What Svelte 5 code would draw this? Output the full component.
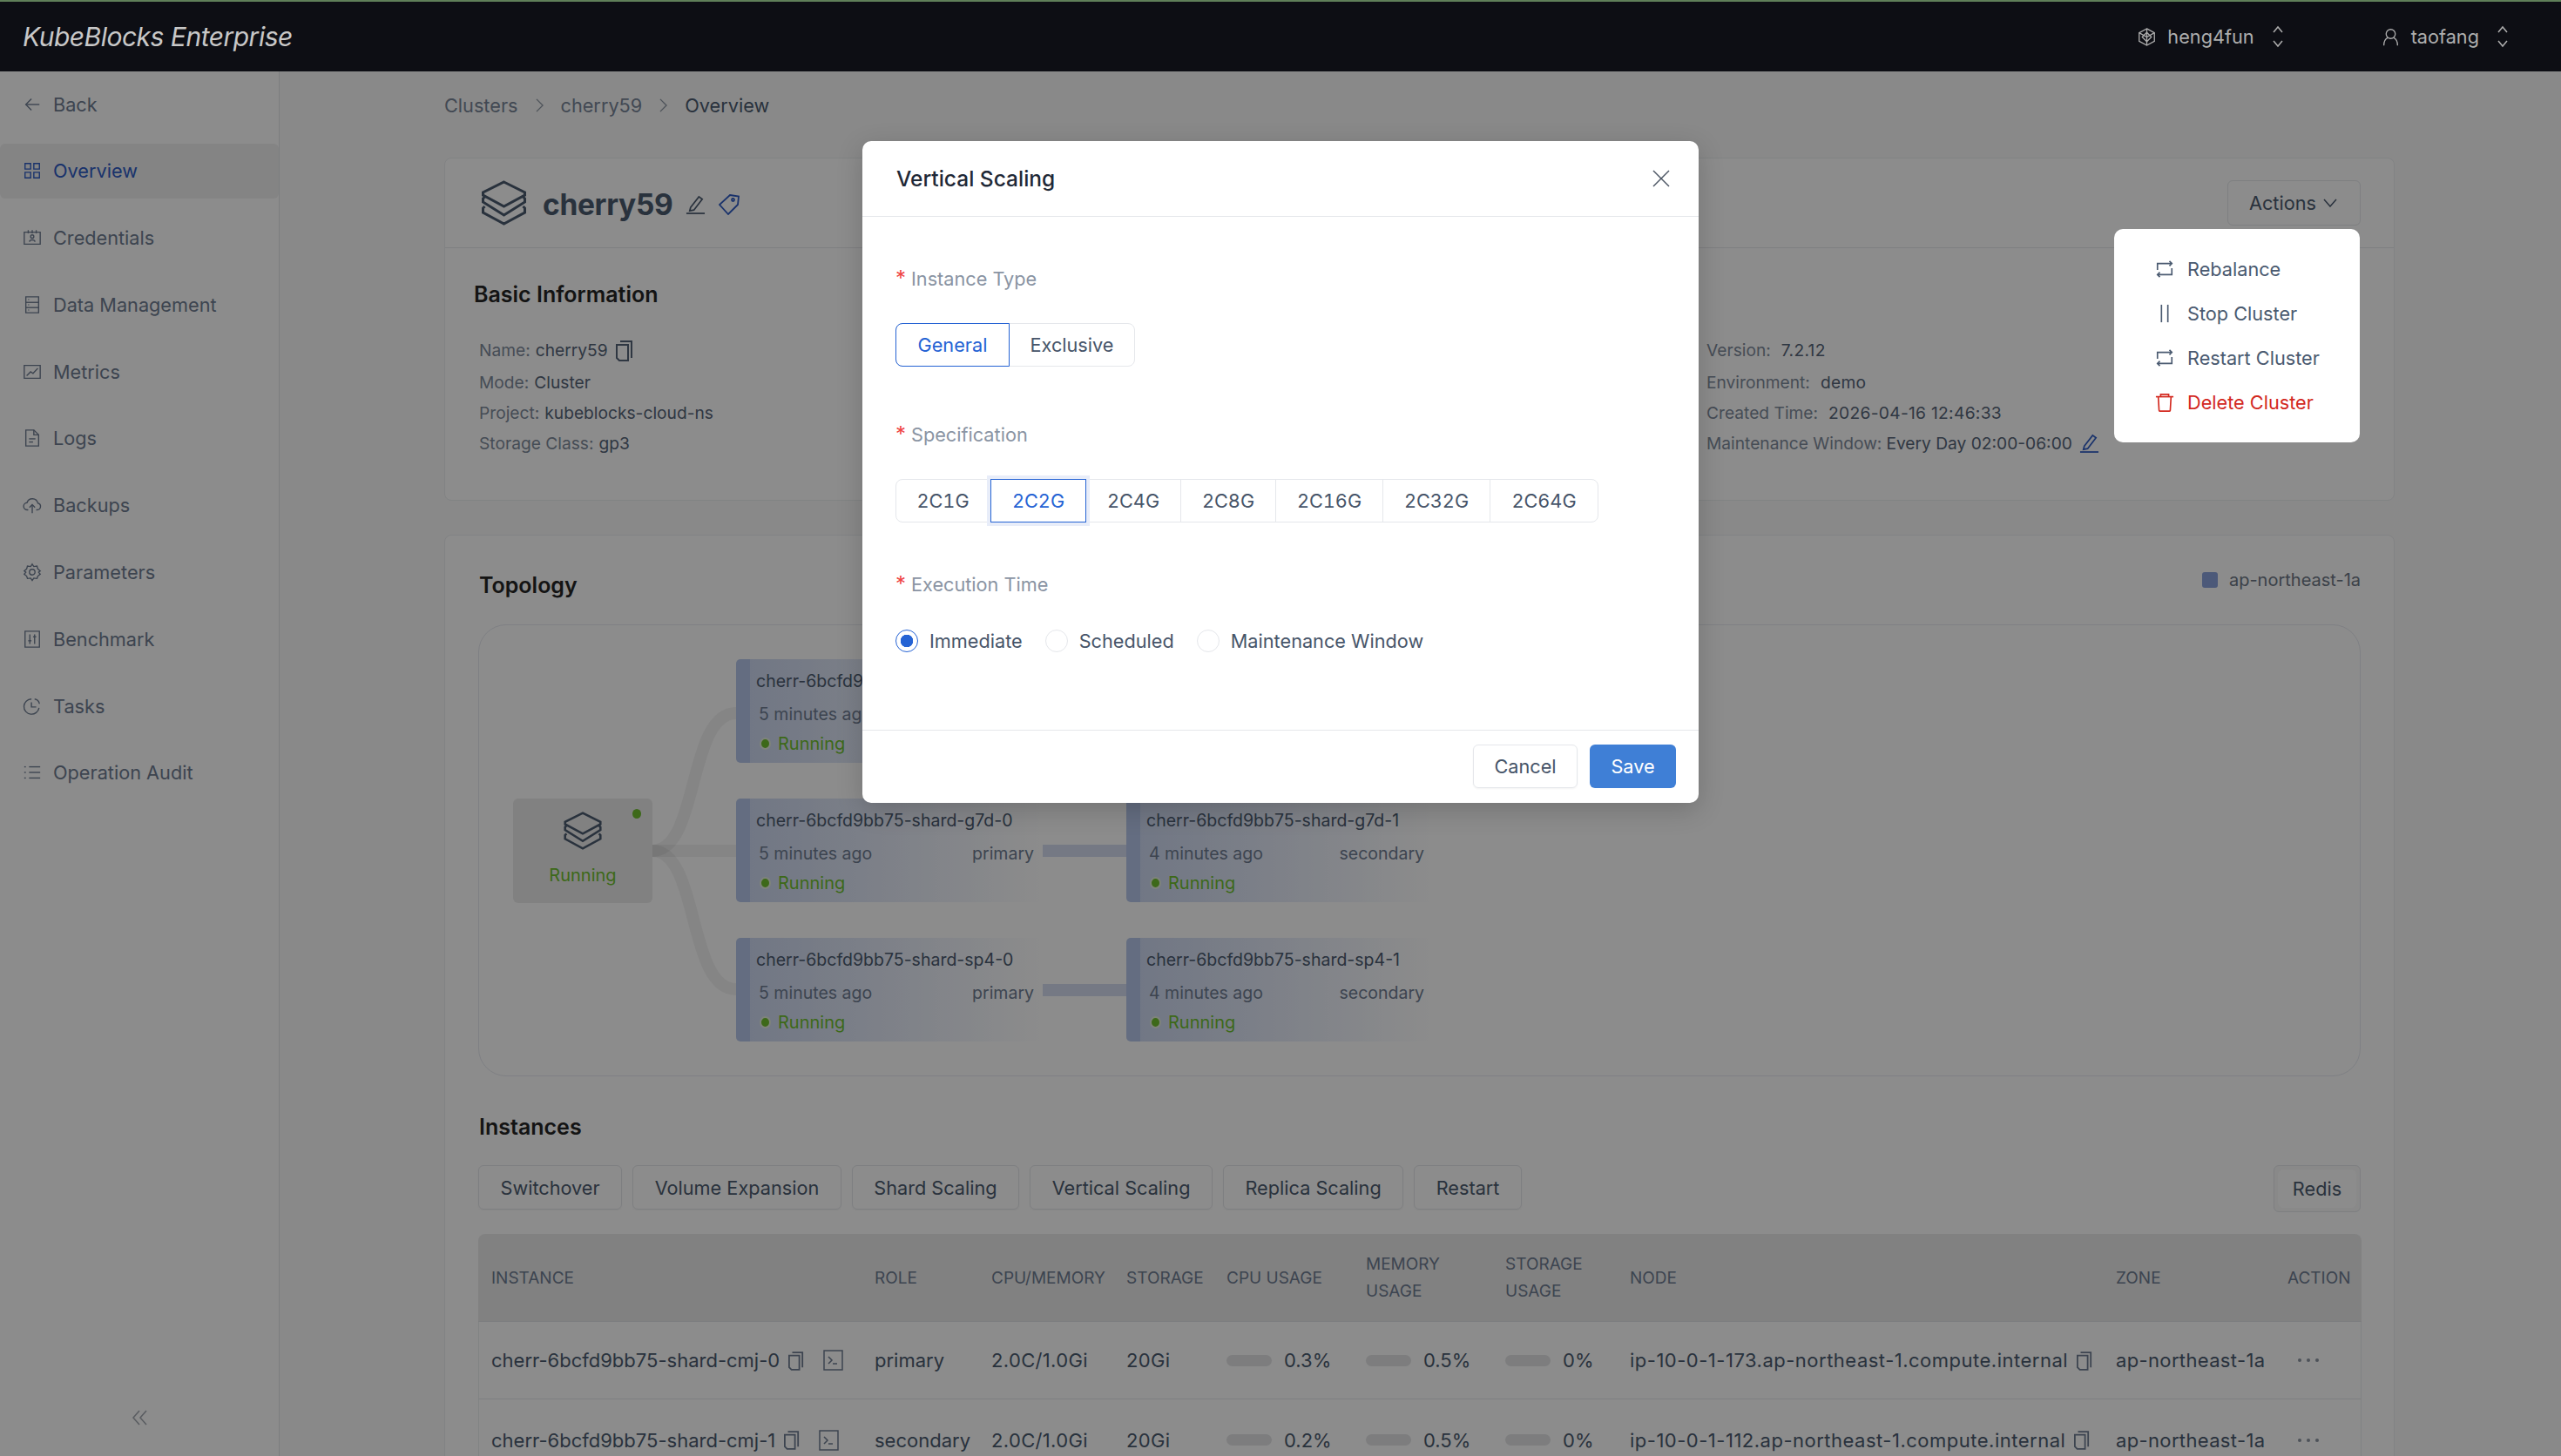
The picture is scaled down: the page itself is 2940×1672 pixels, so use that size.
<script>
    const nav = [
        {label: 'Back', icon: ['M21 12H4', 'M11 5l-7 7 7 7']},
        {label: 'Overview', active: true, icon: ['M3 3h7v7H3z', 'M14 3h7v7h-7z', 'M3 14h7v7H3z', 'M14 14h7v7h-7z']},
        {label: 'Credentials', icon: ['M2 5h20v15H2z', 'M7 2.500v4', 'M12 2.500v4', 'M17 2.500v4', 'M12 8.500a2 2 0 1 0 0 4 2 2 0 0 0 0-4z', 'M8.500 17c.5-3 6.500-3 7 0']},
        {label: 'Data Management', icon: ['M4 2h16v20H4z', 'M4 9h16', 'M4 15.500h16', 'M7 5.500h1', 'M7 12h1', 'M7 18.500h1']},
        {label: 'Metrics', icon: ['M2 4h20v16H2z', 'M5 17l5-5 3 2 6-6.500']},
        {label: 'Logs', icon: ['M4 2h10l6 6v14H4z', 'M14 2v6h6', 'M8 13h8', 'M8 17h5']},
        {label: 'Backups', icon: ['M7 18H6a4.500 4.500 0 0 1-.5-9A7 7 0 0 1 19 9.500 4.300 4.300 0 0 1 18 18h-1', 'M12 22V12', 'M8.500 15l3.500-3.500 3.500 3.500']},
        {label: 'Parameters', icon: ['M12 2l2 3 4-.5 1 3.500 3 2.500-2 1.500 2 2.500-3 2.500-1 3-4-.5-2 3-2-3-4 .5-1-3-3-2.500 2-2.500-2-1.500 3-2.500 1-3.500 4 .5z', 'M12 8.500a3.500 3.500 0 1 0 0 7 3.500 3.500 0 0 0 0-7z']},
        {label: 'Benchmark', icon: ['M3 2h18v20H3z', 'M9 6v12', 'M15 6v12', 'M7 14h4', 'M13 9h4']},
        {label: 'Tasks', icon: ['M11 3a9.500 9.500 0 1 0 9.500 11', 'M11 7v6h6', 'M15 3c3 .5 5.500 3 6 6']},
        {label: 'Operation Audit', icon: ['M8 5h14', 'M8 12h14', 'M8 19h14', 'M2 5h2', 'M2 12h2', 'M2 19h2']},
    ];

    const leftFields = [
        ['Name:', 'cherry59'],
        ['Mode:', 'Cluster'],
        ['Project:', 'kubeblocks-cloud-ns'],
        ['Storage Class:', 'gp3'],
    ];
    const rightFields = [
        ['Version:', '7.2.12'],
        ['Environment:', 'demo'],
        ['Created Time:', '2026-04-16 12:46:33'],
        ['Maintenance Window:', 'Every Day 02:00-06:00'],
    ];

    const shards = ['cmj', 'g7d', 'sp4'];
    const ops = ['Switchover', 'Volume Expansion', 'Shard Scaling', 'Vertical Scaling', 'Replica Scaling', 'Restart'];
    const heads = ['Instance', 'Role', 'CPU/Memory', 'Storage', 'CPU Usage', 'Memory Usage', 'Storage Usage', 'Node', 'Zone', 'Action'];
    const widths = [441, 134, 155, 115, 160, 160, 143, 558, 197, 99];
    const rows = [
        {name: 'cherr-6bcfd9bb75-shard-cmj-0', role: 'primary', cpu: '0.3%', node: 'ip-10-0-1-173.ap-northeast-1.compute.internal'},
        {name: 'cherr-6bcfd9bb75-shard-cmj-1', role: 'secondary', cpu: '0.2%', node: 'ip-10-0-1-112.ap-northeast-1.compute.internal'},
    ];
    const specs = ['2C1G', '2C2G', '2C4G', '2C8G', '2C16G', '2C32G', '2C64G'];
    const swap = ['M3 13V5h18', 'M18 2l3 3-3 3', 'M21 11v8H3', 'M6 16l-3 3 3 3'];
    const menu = [
        {label: 'Rebalance', icon: swap},
        {label: 'Stop Cluster', icon: ['M8 1v22', 'M16 1v22']},
        {label: 'Restart Cluster', icon: swap},
        {label: 'Delete Cluster', danger: true, icon: ['M1 5h22', 'M7 5V2h10v3', 'M4 5l1 17a1 1 0 0 0 1 1h12a1 1 0 0 0 1-1l1-17']},
    ];
    const stack = ['M26 2l24 12v3L26 30 2 17v-3z', 'M4 19l-2 2v4l24 15 24-15v-4l-2-2', 'M4 30l-2 2v5l24 13 24-13v-5l-2-2'];
    const pencil = ['M6 16L16 3l4 3-10 13-5 1z', 'M1 23h22'];
</script>

{#snippet icon(paths, cls, box = '0 0 24 24')}
    <svg class={cls} viewBox={box} fill="none" stroke="currentColor">
        {#each paths as d}
            <path {d} />
        {/each}
    </svg>
{/snippet}

{#snippet copy(cls)}
    <svg class={cls} viewBox="0 0 20 25" fill="none" stroke="currentColor" stroke-width="2">
        <path d="M1 6h13v18H4l-3-3z" />
        <path d="M5 2h13v19" />
    </svg>
{/snippet}

{#snippet updown()}
    <svg class="updown" viewBox="0 0 14 26" fill="none" stroke="currentColor" stroke-width="1.500">
        <path d="M2 8l5-6 5 6" />
        <path d="M2 18l5 6 5-6" />
    </svg>
{/snippet}

<div class="page">
    <header class="topbar">
        <span class="logo">KubeBlocks Enterprise</span>
        <div class="account org">
            <svg class="top-icon" viewBox="0 0 24 24" fill="none" stroke="currentColor" stroke-width="1.500">
                <path d="M12 1l10 5.500v11L12 23 2 17.500v-11z" />
                <path d="M12 6l6 6-6 6-6-6z" />
                <path d="M2 6.500L12 12l10-5.500" />
                <path d="M12 1v22" />
            </svg>
            <span>heng4fun</span>
            {@render updown()}
        </div>
        <div class="account user">
            <svg class="top-icon" viewBox="0 0 24 24" fill="none" stroke="currentColor" stroke-width="1.500">
                <path d="M12 2a6 6 0 1 0 0 12 6 6 0 0 0 0-12z" />
                <path d="M3 23c0-6 3-9 5-10" />
                <path d="M21 23c0-6-3-9-5-10" />
            </svg>
            <span>taofang</span>
            {@render updown()}
        </div>
    </header>

    <div class="body">
        <aside class="sidebar">
            <nav>
                {#each nav as item}
                    <div class="nav-item" class:active={item.active}>
                        {@render icon(item.icon, 'nav-icon')}
                        <span>{item.label}</span>
                    </div>
                {/each}
            </nav>
            <svg class="collapse" viewBox="0 0 17 18" fill="none" stroke="currentColor" stroke-width="1.500">
                <path d="M8 1L1 9l7 8" />
                <path d="M16 1L9 9l7 8" />
            </svg>
        </aside>

        <main class="main">
            <div class="crumbs">
                <span>Clusters</span>
                <svg class="sep" viewBox="0 0 10 18" fill="none" stroke="currentColor" stroke-width="1.500"><path d="M1 1l8 8-8 8" /></svg>
                <span>cherry59</span>
                <svg class="sep" viewBox="0 0 10 18" fill="none" stroke="currentColor" stroke-width="1.500"><path d="M1 1l8 8-8 8" /></svg>
                <span class="current">Overview</span>
            </div>

            <section class="card info-card">
                <div class="card-head">
                    <svg class="stack" viewBox="0 0 52 52" fill="none" stroke="currentColor" stroke-width="3">
                        {#each stack as d}
                            <path {d} />
                        {/each}
                    </svg>
                    <h1>cherry59</h1>
                    {@render icon(pencil, 'pencil')}
                    <svg class="tag" viewBox="0 0 24 24" fill="none" stroke="currentColor" stroke-width="1.800">
                        <path d="M13 1l10 1.500L22 12 11 23 1 12z" />
                        <path d="M16.500 5a1.500 1.500 0 1 0 0 3 1.500 1.500 0 0 0 0-3z" />
                    </svg>
                    <div class="actions">
                        Actions
                        <svg class="chev" viewBox="0 0 16 10" fill="none" stroke="currentColor" stroke-width="1.500"><path d="M1 1l7 8 7-8" /></svg>
                    </div>
                </div>
                <div class="info-body">
                    <h2>Basic Information</h2>
                    <div class="fields">
                        <div class="field-col">
                            {#each leftFields as [label, value], i}
                                <div class="field">
                                    <span class="field-label">{label}</span>
                                    <span class="field-value">{value}</span>
                                    {#if i === 0}
                                        {@render copy('copy-name')}
                                    {/if}
                                </div>
                            {/each}
                        </div>
                        <div class="field-col wide-gap">
                            {#each rightFields as [label, value], i}
                                <div class="field">
                                    <span class="field-label">{label}</span>
                                    <span class="field-value">{value}</span>
                                    {#if i === 3}
                                        {@render icon(pencil, 'pencil-blue')}
                                    {/if}
                                </div>
                            {/each}
                        </div>
                    </div>
                </div>
            </section>

            <section class="card topo-card">
                <div class="topo-head">
                    <h2>Topology</h2>
                    <div class="legend"><i></i>ap-northeast-1a</div>
                </div>
                <div class="topo">
                    <svg class="links" viewBox="0 0 2160 519" fill="none" stroke-width="14">
                        <path d="M199 259C253 259 239 101 295 101" />
                        <path d="M199 259H295" />
                        <path d="M199 259C253 259 239 418 295 418" />
                    </svg>
                    <div class="root-node">
                        <i class="root-dot"></i>
                        <svg class="root-icon" viewBox="0 0 52 52" fill="none" stroke="currentColor" stroke-width="3">
                            {#each stack as d}
                                <path {d} />
                            {/each}
                        </svg>
                        <span class="running">Running</span>
                    </div>
                    {#each shards as shard, i}
                        <div class="pod" style="left: 295px; top: {39 + i * 160}px">
                            <div class="pod-name">cherr-6bcfd9bb75-shard-{shard}-0</div>
                            <div class="pod-meta"><span>5 minutes ago</span><span>primary</span></div>
                            <div class="pod-status"><i></i><span class="running">Running</span></div>
                        </div>
                        <div class="pod-link" style="top: {92 + i * 160}px"></div>
                        <div class="pod" style="left: 743px; top: {39 + i * 160}px">
                            <div class="pod-name">cherr-6bcfd9bb75-shard-{shard}-1</div>
                            <div class="pod-meta"><span>4 minutes ago</span><span>secondary</span></div>
                            <div class="pod-status"><i></i><span class="running">Running</span></div>
                        </div>
                    {/each}
                </div>

                <h2 class="instances-title">Instances</h2>
                <div class="toolbar">
                    {#each ops as op}
                        <div class="btn">{op}</div>
                    {/each}
                    <div class="switch"><span>Redis</span></div>
                </div>

                <table>
                    <colgroup>
                        {#each widths as w}
                            <col style="width: {w}px" />
                        {/each}
                    </colgroup>
                    <thead>
                        <tr>
                            {#each heads as head}
                                <th>{head}</th>
                            {/each}
                        </tr>
                    </thead>
                    <tbody>
                        {#each rows as row}
                            <tr>
                                <td>
                                    <div class="inst">
                                        {row.name}
                                        {@render copy('copy-cell')}
                                        <svg class="term" viewBox="0 0 23 24" fill="none" stroke="currentColor" stroke-width="1.500">
                                            <path d="M1 1h21v22H1z" />
                                            <path d="M6 8l4 4-4 4" />
                                            <path d="M11 16h5" />
                                        </svg>
                                    </div>
                                </td>
                                <td>{row.role}</td>
                                <td class="spaced">2.0C/1.0Gi</td>
                                <td class="spaced">20Gi</td>
                                <td><div class="usage"><i></i>{row.cpu}</div></td>
                                <td><div class="usage"><i></i>0.5%</div></td>
                                <td><div class="usage"><i></i>0%</div></td>
                                <td>
                                    <div class="inst">
                                        <span class="node-name">{row.node}</span>
                                        {@render copy('copy-cell')}
                                    </div>
                                </td>
                                <td class="spaced">ap-northeast-1a</td>
                                <td><div class="dots"><i></i><i></i><i></i></div></td>
                            </tr>
                        {/each}
                    </tbody>
                </table>
            </section>
        </main>

        <div class="overlay"></div>

        <div class="dropdown">
            {#each menu as item}
                <div class="menu-item" class:danger={item.danger}>
                    {@render icon(item.icon, 'menu-icon')}
                    <span>{item.label}</span>
                </div>
            {/each}
        </div>

        <div class="modal">
            <div class="modal-head">
                <span>Vertical Scaling</span>
                <svg class="close" viewBox="0 0 20 20" fill="none" stroke="currentColor" stroke-width="1.500">
                    <path d="M1 1l18 18" />
                    <path d="M19 1L1 19" />
                </svg>
            </div>
            <div class="modal-body">
                <div class="form-label first"><b>*</b>Instance Type</div>
                <div class="segments">
                    <div class="seg selected type-a">General</div>
                    <div class="seg type-b">Exclusive</div>
                </div>
                <div class="form-label second"><b>*</b>Specification</div>
                <div class="segments">
                    {#each specs as spec, i}
                        <div class="seg spec" class:selected={i === 1} class:ring={i === 1}>{spec}</div>
                    {/each}
                </div>
                <div class="form-label third"><b>*</b>Execution Time</div>
                <div class="radios">
                    <div class="radio"><i class="on"></i>Immediate</div>
                    <div class="radio"><i></i>Scheduled</div>
                    <div class="radio"><i></i>Maintenance Window</div>
                </div>
            </div>
            <div class="modal-foot">
                <div class="foot-btn cancel">Cancel</div>
                <div class="foot-btn save">Save</div>
            </div>
        </div>
    </div>
</div>

<style>
    :global(html), :global(body) {
        margin: 0;
        height: 100%;
        overflow: hidden;
    }

    .page {
        height: 100vh;
        display: flex;
        flex-direction: column;
        overflow: hidden;
        font-family: Inter, "Liberation Sans", sans-serif;
        font-size: 21.7px;
        color: #5b6675;
        background: #fafafa;
    }

    /* top bar sits above the dimmed layer */
    .topbar {
        flex: none;
        box-sizing: border-box;
        height: 82px;
        border-top: 2px solid #5f7f59;
        background: #0d0e14;
        display: flex;
        align-items: center;
        color: #aeaeae;
    }

    .logo {
        margin-left: 26px;
        font-size: 30px;
        font-style: italic;
        color: #c8c8c8;
        letter-spacing: -0.5px;
    }

    .account {
        display: flex;
        align-items: center;
    }

    .org {
        margin-left: auto;
    }

    .user {
        margin-left: 112px;
        margin-right: 60px;
    }

    .top-icon {
        width: 21px;
        height: 21px;
        margin-right: 13px;
    }

    .updown {
        width: 14px;
        height: 26px;
        margin-left: 20px;
    }

    .body {
        flex: 1;
        position: relative;
        display: flex;
        min-height: 0;
    }

    .sidebar {
        flex: none;
        width: 321px;
        box-sizing: border-box;
        border-right: 1px solid #e4e5e7;
        background: #ffffff;
        position: relative;
        padding-top: 6px;
    }

    nav {
        display: flex;
        flex-direction: column;
        gap: 13.800px;
    }

    .nav-item {
        height: 63px;
        display: flex;
        align-items: center;
        padding-left: 26px;
        border-radius: 6px;
        color: #6f7d92;
    }

    .nav-item.active {
        color: #2f5cc4;
        background: #f0f0f1;
    }

    .nav-icon {
        width: 22px;
        height: 22px;
        margin-right: 13px;
        stroke-width: 1.500;
    }

    .collapse {
        position: absolute;
        left: 152px;
        bottom: 35px;
        width: 17px;
        height: 18px;
        color: #a3a8b0;
    }

    .main {
        flex: 1;
        min-width: 0;
        padding: 23px 191px 0 189px;
    }

    .crumbs {
        display: flex;
        align-items: center;
        height: 32px;
        color: #788598;
    }

    .sep {
        width: 9px;
        height: 16px;
        margin: 0 20px;
        color: #8f98a4;
    }

    .current {
        color: #4c5b70;
    }

    .card {
        box-sizing: border-box;
        background: #fff;
        border: 1px solid #eceef0;
        border-radius: 8px;
    }

    .info-card {
        height: 394px;
        margin-top: 44px;
    }

    .card-head {
        height: 103px;
        box-sizing: border-box;
        border-bottom: 1px solid #e5e7eb;
        display: flex;
        align-items: center;
        padding: 0 38px 0 41px;
    }

    .stack {
        width: 53px;
        height: 52px;
        color: #4c5b70;
    }

    h1 {
        margin: 3px 14px 0 18px;
        font-size: 33.500px;
        font-weight: 700;
        color: #4c5b70;
        letter-spacing: -0.3px;
    }

    .pencil {
        width: 23px;
        height: 23px;
        margin-top: 3px;
        color: #4c5b70;
        stroke-width: 1.800;
    }

    .tag {
        width: 24px;
        height: 24px;
        margin: 3px 0 0 15px;
        color: #2f5cc4;
    }

    .actions {
        margin-left: auto;
        box-sizing: border-box;
        width: 153px;
        height: 52px;
        border: 1px solid #e5e7eb;
        border-radius: 6px;
        display: flex;
        align-items: center;
        padding-left: 24px;
        color: #4c5b70;
    }

    .chev {
        width: 16px;
        height: 10px;
        margin-left: 8px;
    }

    h2 {
        margin: 0;
        font-size: 25px;
        font-weight: 600;
        line-height: 40px;
        color: #262626;
    }

    .info-body {
        padding: 33px 0 0 33px;
    }

    .fields {
        display: flex;
        margin: 25px 0 0 6px;
        font-size: 19.200px;
    }

    .field-col {
        flex: none;
        width: 1409px;
    }

    .field-col.wide-gap {
        width: 760px;
    }

    .field {
        height: 35px;
        display: flex;
        align-items: center;
    }

    .field:first-child {
        height: 38px;
    }

    .field-label {
        color: #7f8b9c;
    }

    .field-value {
        margin-left: 6px;
        color: #566478;
    }

    .wide-gap .field-value {
        margin-left: 12px;
        letter-spacing: 0.3px;
    }

    .wide-gap .field:last-child .field-value {
        margin-left: 5px;
        letter-spacing: 0;
    }

    .copy-name {
        width: 20px;
        height: 25px;
        margin-left: 9px;
        color: #566478;
    }

    .pencil-blue {
        width: 23px;
        height: 23px;
        margin-left: 8px;
        color: #2f5cc4;
        stroke-width: 1.800;
    }

    .topo-card {
        height: 1100px;
        margin-top: 39px;
        padding: 0 38px;
    }

    .topo-head {
        height: 102px;
        box-sizing: border-box;
        padding: 37px 0 0 1px;
        display: flex;
        justify-content: space-between;
    }

    .legend {
        display: flex;
        align-items: center;
        height: 28px;
        font-size: 20px;
        color: #6d7785;
    }

    .legend i {
        width: 18px;
        height: 18px;
        margin-right: 13px;
        border-radius: 3px;
        background: #8ba3dc;
    }

    .topo {
        position: relative;
        box-sizing: border-box;
        height: 519px;
        border: 1px solid #e7e9f0;
        border-radius: 32px;
    }

    .links {
        position: absolute;
        inset: 0;
        width: 2160px;
        height: 519px;
    }

    .links path {
        stroke: rgba(0, 0, 0, 0.05);
    }

    .root-node {
        position: absolute;
        left: 39px;
        top: 199px;
        width: 160px;
        height: 120px;
        border-radius: 6px;
        background: #ebebeb;
        display: flex;
        flex-direction: column;
        align-items: center;
    }

    .root-dot {
        position: absolute;
        right: 13px;
        top: 12px;
        width: 10px;
        height: 11px;
        border-radius: 50%;
        background: #6fbf2f;
    }

    .root-icon {
        width: 44px;
        height: 44px;
        margin-top: 15px;
        color: #4c5b70;
    }

    .running {
        color: #6fbf2f;
        font-size: 20px;
    }

    .root-node .running {
        margin-top: 17px;
    }

    .pod {
        position: absolute;
        box-sizing: border-box;
        width: 350px;
        height: 119px;
        border-left: 16px solid #b7c7eb;
        border-radius: 5px 0 0 5px;
        background: linear-gradient(90deg, #ced9f2, rgba(206, 217, 242, 0));
        padding-top: 13px;
        font-size: 19.500px;
    }

    .pod-name {
        margin-left: 7px;
        line-height: 24px;
        white-space: nowrap;
        color: #4c5b70;
    }

    .pod-meta {
        display: flex;
        justify-content: space-between;
        margin: 14px 8px 0 10px;
        line-height: 24px;
        color: #6f7d92;
    }

    .pod-status {
        display: flex;
        align-items: center;
        margin: 10px 0 0 11px;
        line-height: 24px;
    }

    .pod-status i {
        width: 9px;
        height: 10px;
        margin-right: 8px;
        border: 2px solid #e6efe0;
        border-radius: 50%;
        background: #6fbf2f;
    }

    .pod-link {
        position: absolute;
        left: 647px;
        width: 96px;
        height: 14px;
        background: #d5ddf0;
    }

    .instances-title {
        margin: 38px 0 0 1px;
    }

    .toolbar {
        display: flex;
        gap: 12px;
        height: 54px;
        margin-top: 24px;
    }

    .btn {
        box-sizing: border-box;
        height: 51px;
        padding: 0 24.500px;
        border: 1px solid #e5e7eb;
        border-radius: 6px;
        display: flex;
        align-items: center;
        color: #4c5b70;
        box-shadow: 0 1px 2px rgba(0, 0, 0, 0.04);
    }

    .switch {
        margin-left: auto;
        box-sizing: border-box;
        width: 100px;
        height: 54px;
        padding: 4px;
        border: 1px solid #e5e7eb;
        border-radius: 6px;
        background: #fafafa;
    }

    .switch span {
        display: flex;
        align-items: center;
        justify-content: center;
        height: 44px;
        border-radius: 6px;
        background: #fff;
        color: #4c5b70;
    }

    table {
        width: 2162px;
        margin-top: 25px;
        table-layout: fixed;
        border-collapse: separate;
        border-spacing: 0;
        white-space: nowrap;
    }

    th {
        height: 101px;
        box-sizing: border-box;
        padding: 0 14px;
        font-size: 19px;
        font-weight: 400;
        line-height: 31px;
        text-align: left;
        text-transform: uppercase;
        white-space: normal;
        color: #6f7d92;
        background: #ebebec;
        border-bottom: 1px solid #e2e4e8;
    }

    th:first-child {
        padding-left: 15px;
        border-radius: 8px 0 0 0;
    }

    th:last-child {
        border-radius: 0 8px 0 0;
    }

    td {
        height: 89px;
        box-sizing: border-box;
        padding: 0 14px;
        font-size: 22px;
        color: #4c5b70;
        border-bottom: 1px solid #e5e7eb;
    }

    tbody tr:last-child td {
        height: 94px;
    }

    td:first-child {
        padding-left: 14px;
        border-left: 1px solid #eceef0;
    }

    td:last-child {
        border-right: 1px solid #eceef0;
    }

    .spaced {
        letter-spacing: 0.35px;
    }

    .node-name {
        letter-spacing: 0.5px;
    }

    .inst {
        display: flex;
        align-items: center;
    }

    .copy-cell {
        flex: none;
        width: 18px;
        height: 23px;
        margin-left: 10px;
        color: #6f7d92;
    }

    .term {
        flex: none;
        width: 23px;
        height: 24px;
        margin-left: 22px;
        color: #6f7d92;
    }

    .usage {
        display: flex;
        align-items: center;
    }

    .usage i {
        width: 52px;
        height: 13px;
        margin-right: 14px;
        border-radius: 7px;
        background: #e3e4e6;
    }

    .dots {
        display: flex;
        gap: 6px;
        margin-left: 12px;
    }

    .dots i {
        width: 4px;
        height: 4px;
        border-radius: 50%;
        background: #8c95a2;
    }

    .overlay {
        position: absolute;
        inset: 0;
        background: rgba(0, 0, 0, 0.45);
    }

    .dropdown {
        position: absolute;
        left: 2427px;
        top: 181px;
        box-sizing: border-box;
        width: 282px;
        height: 245px;
        padding-top: 20px;
        border-radius: 10px;
        background: #fff;
    }

    .menu-item {
        height: 51.200px;
        display: flex;
        align-items: center;
        padding-left: 47px;
        color: #4a5a70;
    }

    .menu-item.danger {
        color: #d3291f;
    }

    .menu-icon {
        width: 22px;
        height: 24px;
        margin-right: 15px;
        stroke-width: 1.800;
    }

    .modal {
        position: absolute;
        left: 990px;
        top: 80px;
        width: 960px;
        height: 760px;
        display: flex;
        flex-direction: column;
        border-radius: 10px;
        background: #fff;
        box-shadow: 0 8px 30px rgba(0, 0, 0, 0.18);
    }

    .modal-head {
        flex: none;
        box-sizing: border-box;
        height: 87px;
        border-bottom: 1px solid #e5e7eb;
        display: flex;
        align-items: center;
        justify-content: space-between;
        padding: 0 33px 0 39px;
        font-size: 24.500px;
        font-weight: 500;
        color: #1f2937;
    }

    .close {
        width: 20px;
        height: 20px;
        color: #4b5563;
    }

    .modal-body {
        flex: 1;
        padding: 55px 38px 0;
    }

    .form-label {
        line-height: 32px;
        color: #8a94a3;
    }

    .form-label b {
        display: inline-block;
        width: 18px;
        font-size: 24px;
        font-weight: 400;
        color: #ef4444;
    }

    .second {
        margin-top: 62px;
    }

    .third {
        margin-top: 55px;
    }

    .segments {
        display: inline-flex;
        margin-top: 35px;
        height: 50px;
        box-sizing: border-box;
        border: 1px solid #e5e7eb;
        border-radius: 8px;
        color: #475569;
        vertical-align: top;
    }

    .seg {
        position: relative;
        box-sizing: border-box;
        height: 50px;
        margin-top: -1px;
        padding: 0 10px;
        display: flex;
        align-items: center;
        justify-content: center;
        border-right: 1px solid #e5e7eb;
    }

    .seg:last-child {
        border-right: 0;
    }

    .selected {
        color: #2563d4;
        border: 1px solid #2563d4;
        margin-left: -1px;
    }

    .type-a {
        width: 131px;
        border-radius: 8px 0 0 8px;
    }

    .type-b {
        width: 143px;
    }

    .spec {
        width: 109px;
        font-variant-numeric: tabular-nums;
    }

    .spec:first-child {
        width: 108px;
    }

    .spec:nth-child(n + 5) {
        width: 123px;
    }

    .ring {
        width: 110px;
        margin-left: 0;
        z-index: 1;
        box-shadow: 0 0 0 4px #e8edf9;
    }

    .radios {
        display: flex;
        margin-top: 33px;
        height: 32px;
        color: #475569;
    }

    .radio {
        display: flex;
        align-items: center;
        margin-right: 26px;
    }

    .radio i {
        box-sizing: border-box;
        width: 26px;
        height: 26px;
        margin-right: 13px;
        border: 1px solid #e5e7eb;
        border-radius: 50%;
    }

    .radio i.on {
        border-color: #2563d4;
        background: radial-gradient(circle, #2563d4 0 7px, #fff 7.500px);
    }

    .modal-foot {
        flex: none;
        box-sizing: border-box;
        height: 84px;
        border-top: 1px solid #e5e7eb;
        display: flex;
        justify-content: flex-end;
        gap: 14px;
        padding: 16px 26px 0 0;
    }

    .foot-btn {
        box-sizing: border-box;
        height: 50px;
        border-radius: 6px;
        display: flex;
        align-items: center;
        justify-content: center;
    }

    .cancel {
        width: 120px;
        border: 1px solid #e5e7eb;
        color: #475569;
        box-shadow: 0 1px 2px rgba(0, 0, 0, 0.05);
    }

    .save {
        width: 99px;
        color: #fff;
        background: #3f7fd6;
    }
</style>
